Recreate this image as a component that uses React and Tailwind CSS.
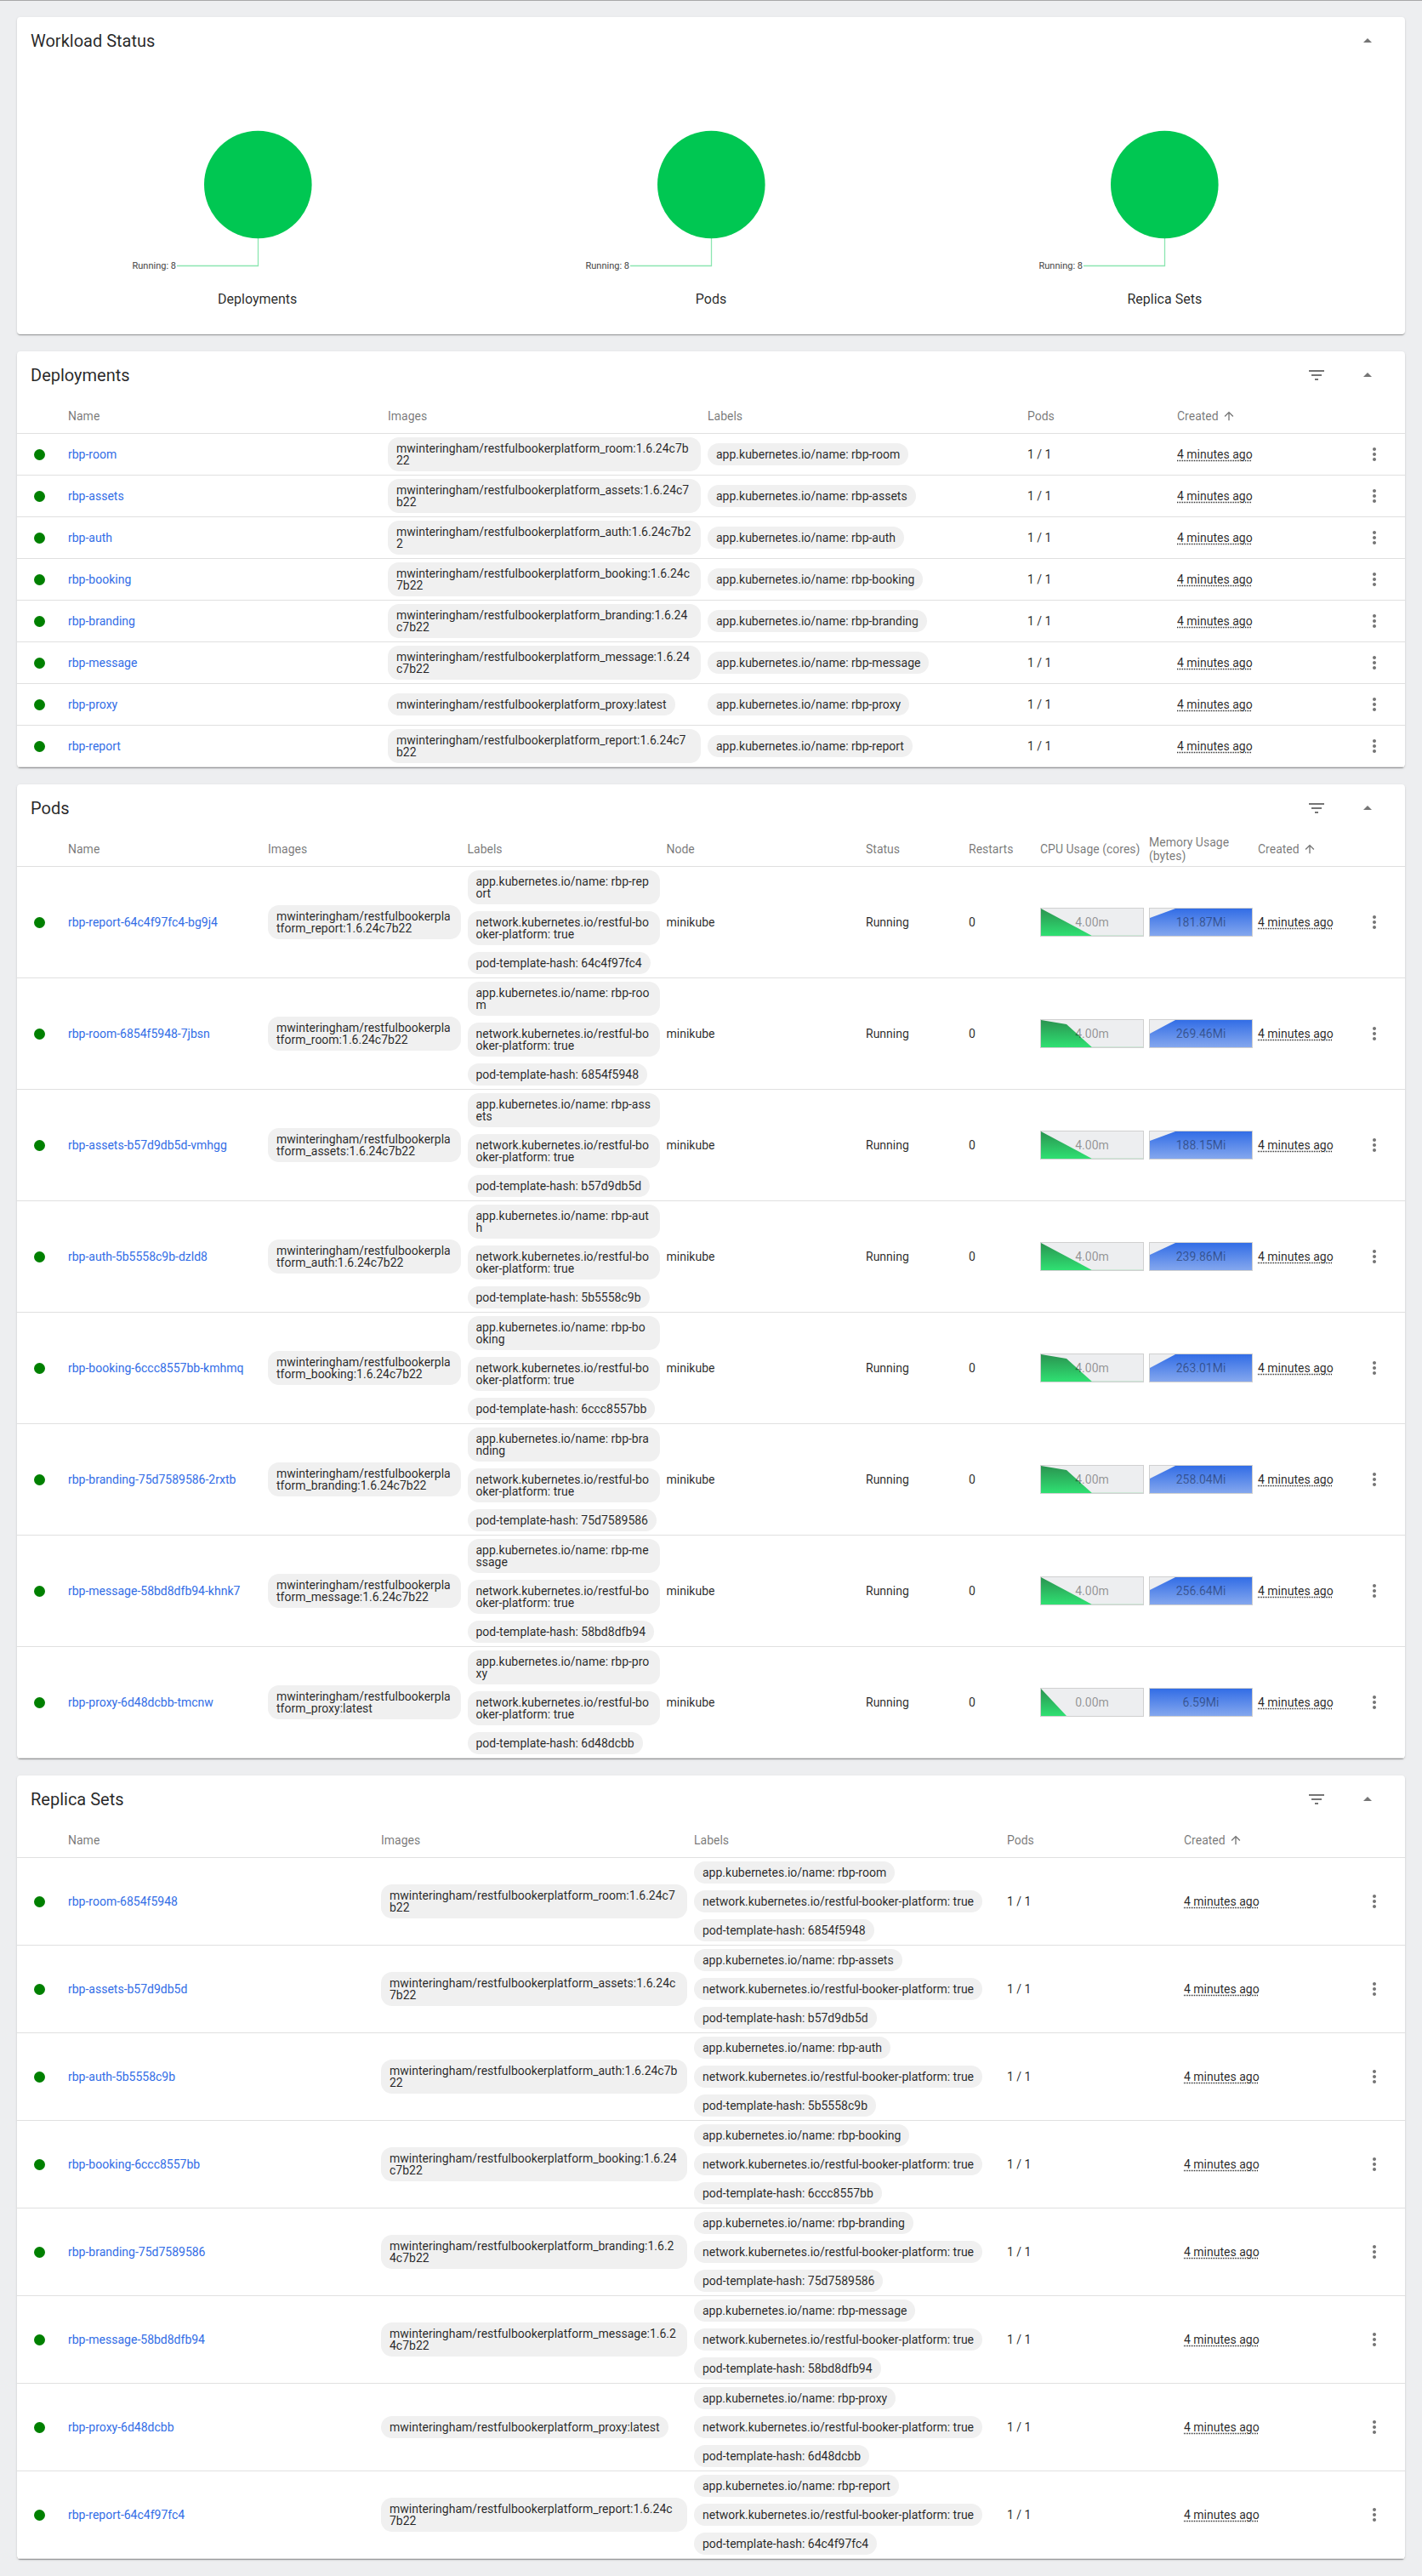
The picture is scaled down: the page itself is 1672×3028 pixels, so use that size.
import React from 'react';

const TAG = '1.6.24c7b22';
const services = [
  { name: 'room', hash: '6854f5948', pod: '7jbsn' },
  { name: 'assets', hash: 'b57d9db5d', pod: 'vmhgg' },
  { name: 'auth', hash: '5b5558c9b', pod: 'dzld8' },
  { name: 'booking', hash: '6ccc8557bb', pod: 'kmhmq' },
  { name: 'branding', hash: '75d7589586', pod: '2rxtb' },
  { name: 'message', hash: '58bd8dfb94', pod: 'khnk7' },
  { name: 'proxy', hash: '6d48dcbb', pod: 'tmcnw', tag: 'latest' },
  { name: 'report', hash: '64c4f97fc4', pod: 'bg9j4' },
];

const imageOf = (s) => `mwinteringham/restfulbookerplatform_${s.name}:${s.tag || TAG}`;

// pods list is sorted differently from the other two tables
const podRows = [
  { s: 'report', cpu: '0,0 60,32', line: true, cpuText: '4.00m', memY: 11, memText: '181.87Mi' },
  { s: 'room', cpu: '0,0 30,5 60,32', line: true, cpuText: '4.00m', memY: 16, memText: '269.46Mi' },
  { s: 'assets', cpu: '0,0 60,32', line: true, cpuText: '4.00m', memY: 11, memText: '188.15Mi' },
  { s: 'auth', cpu: '0,0 60,32', line: true, cpuText: '4.00m', memY: 14, memText: '239.86Mi' },
  { s: 'booking', cpu: '0,0 30,5 60,32', line: true, cpuText: '4.00m', memY: 16, memText: '263.01Mi' },
  { s: 'branding', cpu: '0,0 30,5 60,32', line: true, cpuText: '4.00m', memY: 15, memText: '258.04Mi' },
  { s: 'message', cpu: '0,0 60,32', line: true, cpuText: '4.00m', memY: 15, memText: '256.64Mi' },
  { s: 'proxy', cpu: '0,0 30,32', line: false, cpuText: '0.00m', memY: 0, memText: '6.59Mi' },
].map((r) => ({ ...r, svc: services.find((x) => x.name === r.s) }));

const Chip = ({ children }) => (
  <span className="inline-block max-w-full break-all rounded-[13px] bg-[#f0f0f0] px-2.5 py-1.5 text-[14px] leading-[14px] text-black/85">
    {children}
  </span>
);

const Dot = () => (
  <div className="flex justify-center pr-[8px]">
    <div className="h-[13px] w-[13px] rounded-full bg-[#008000]" />
  </div>
);

const Kebab = () => (
  <svg width="24" height="24" viewBox="0 0 24 24" fill="#757575">
    <path d="M12 8c1.1 0 2-.9 2-2s-.9-2-2-2-2 .9-2 2 .9 2 2 2zm0 2c-1.1 0-2 .9-2 2s.9 2 2 2 2-.9 2-2-.9-2-2-2zm0 6c-1.1 0-2 .9-2 2s.9 2 2 2 2-.9 2-2-.9-2-2-2z" />
  </svg>
);

const CreatedCell = () => (
  <div className="flex items-center justify-between pr-6">
    <span className="underline decoration-dotted underline-offset-2">4 minutes ago</span>
    <Kebab />
  </div>
);

const CreatedHeader = () => (
  <div className="flex items-center gap-1">
    Created
    <svg width="16" height="16" viewBox="0 0 24 24" fill="#757575">
      <path d="M4 12l1.41 1.41L11 7.83V20h2V7.83l5.58 5.59L20 12l-8-8-8 8z" />
    </svg>
  </div>
);

const Card = ({ title, actions, children }) => (
  <section className="rounded bg-white shadow-[0_2px_1px_-1px_rgba(0,0,0,0.2),0_1px_1px_0_rgba(0,0,0,0.14),0_1px_3px_0_rgba(0,0,0,0.12)]">
    <div className="flex h-14 items-center justify-between pl-4 pr-8">
      <h2 className="text-[20px] font-normal text-black/85">{title}</h2>
      <div className="flex items-center gap-9">
        {actions && (
          <svg width="24" height="24" viewBox="0 0 24 24" fill="#757575">
            <path d="M10 18h4v-2h-4v2zM3 6v2h18V6H3zm3 7h12v-2H6v2z" />
          </svg>
        )}
        <svg width="24" height="24" viewBox="0 0 24 24" fill="#757575">
          <path d="M7 14l5-5 5 5z" />
        </svg>
      </div>
    </div>
    {children}
  </section>
);

const Header = ({ cols, children }) => (
  <div className={`grid h-[41px] items-center border-b border-[#e0e0e0] text-[14px] leading-4 text-black/55 ${cols}`}>
    <div />
    {children}
  </div>
);

const Row = ({ cols, height, children }) => (
  <div className={`grid items-center border-b border-[#e0e0e0] text-[14px] text-black/85 ${cols} ${height}`}>
    <Dot />
    {children}
  </div>
);

const Name = ({ children }) => <span className="text-[#326de6]">{children}</span>;

const Spark = ({ id, color, points, line, text }) => (
  <div className="relative h-[34px] w-[122px] border border-[#d0d0d0] bg-[#edeef0]">
    <svg className="absolute inset-0 h-full w-full" viewBox="0 0 120 32" preserveAspectRatio="none">
      <defs>
        <linearGradient id={id} x1="0" y1="0" x2="0" y2="1">
          <stop offset="0" stopColor={color[0]} />
          <stop offset="1" stopColor={color[1]} />
        </linearGradient>
      </defs>
      {line && <rect x="60" y="31" width="60" height="1" fill="#cfe8d8" />}
      <polygon points={points} fill={`url(#${id})`} />
    </svg>
    <div className="absolute inset-0 flex items-center justify-center text-[14px] text-black/40">{text}</div>
  </div>
);

const Donut = ({ label }) => (
  <div className="flex flex-col items-center">
    <svg width="300" height="230" viewBox="0 0 300 230">
      <circle cx="150.3" cy="117" r="63.3" fill="#00c752" />
      <polyline points="150.5,180 150.5,212.5 55,212.5" fill="none" stroke="#00c752" strokeOpacity="0.45" strokeWidth="1.3" />
      <text x="54" y="216" textAnchor="end" fontSize="11" fill="#444">Running: 8</text>
    </svg>
    <div className="mt-2.5 text-[16px] leading-6 text-black/85">{label}</div>
  </div>
);

const DEPLOY_COLS = 'grid-cols-[60px_376px_376px_376px_176px_1fr]';
const POD_COLS = 'grid-cols-[60px_235px_234.5px_234px_234.5px_121px_84px_128px_128px_1fr]';
const RS_COLS = 'grid-cols-[60px_368px_368px_368px_208px_1fr]';

const App = () => {
  return (
    <div className="min-h-[3028px] bg-[#edeef0] font-[Roboto,sans-serif]">
      <div className="h-px bg-[#a8a8a8]" />
      <main className="flex flex-col gap-5 px-5 pb-5 pt-[19px]">

        <Card title="Workload Status">
          <div className="grid h-[317px] grid-cols-3 px-4 pt-6">
            <Donut label="Deployments" />
            <Donut label="Pods" />
            <Donut label="Replica Sets" />
          </div>
        </Card>

        <Card title="Deployments" actions>
          <Header cols={DEPLOY_COLS}>
            <div>Name</div>
            <div>Images</div>
            <div>Labels</div>
            <div>Pods</div>
            <CreatedHeader />
          </Header>
          {services.map((s) => (
            <Row key={s.name} cols={DEPLOY_COLS} height="h-[49px]">
              <Name>{`rbp-${s.name}`}</Name>
              <div className="pr-2"><Chip>{imageOf(s)}</Chip></div>
              <div className="pr-2"><Chip>{`app.kubernetes.io/name: rbp-${s.name}`}</Chip></div>
              <div>1 / 1</div>
              <CreatedCell />
            </Row>
          ))}
        </Card>

        <Card title="Pods" actions>
          <Header cols={POD_COLS}>
            <div>Name</div>
            <div>Images</div>
            <div>Labels</div>
            <div>Node</div>
            <div>Status</div>
            <div>Restarts</div>
            <div>CPU Usage (cores)</div>
            <div>Memory Usage (bytes)</div>
            <CreatedHeader />
          </Header>
          {podRows.map((r, i) => (
            <Row key={r.s} cols={POD_COLS} height="h-[131px]">
              <Name>{`rbp-${r.s}-${r.svc.hash}-${r.svc.pod}`}</Name>
              <div className="pr-2"><Chip>{imageOf(r.svc)}</Chip></div>
              <div className="flex flex-col items-start gap-2 pr-2">
                <Chip>{`app.kubernetes.io/name: rbp-${r.s}`}</Chip>
                <Chip>network.kubernetes.io/restful-booker-platform: true</Chip>
                <Chip>{`pod-template-hash: ${r.svc.hash}`}</Chip>
              </div>
              <div>minikube</div>
              <div>Running</div>
              <div>0</div>
              <Spark
                id={`cpu-${i}`}
                color={['#2a9350', '#2fe072']}
                points={`${r.cpu} 0,32`}
                line={r.line}
                text={r.cpuText}
              />
              <Spark
                id={`mem-${i}`}
                color={['#326de6', '#84a7ee']}
                points={`0,${r.memY} 30,0 120,0 120,32 0,32`}
                text={r.memText}
              />
              <CreatedCell />
            </Row>
          ))}
        </Card>

        <Card title="Replica Sets" actions>
          <Header cols={RS_COLS}>
            <div>Name</div>
            <div>Images</div>
            <div>Labels</div>
            <div>Pods</div>
            <CreatedHeader />
          </Header>
          {services.map((s) => (
            <Row key={s.name} cols={RS_COLS} height="h-[103px]">
              <Name>{`rbp-${s.name}-${s.hash}`}</Name>
              <div className="pr-2"><Chip>{imageOf(s)}</Chip></div>
              <div className="flex flex-col items-start gap-2 pr-2">
                <Chip>{`app.kubernetes.io/name: rbp-${s.name}`}</Chip>
                <Chip>network.kubernetes.io/restful-booker-platform: true</Chip>
                <Chip>{`pod-template-hash: ${s.hash}`}</Chip>
              </div>
              <div>1 / 1</div>
              <CreatedCell />
            </Row>
          ))}
        </Card>

      </main>
    </div>
  );
};

export default App;
